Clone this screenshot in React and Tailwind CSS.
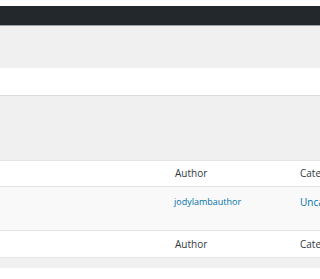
export default function App() {
  const font = { fontFamily: '"Open Sans", "Liberation Sans", sans-serif' };
  return (
    <div className="w-[320px] h-[279px] bg-white overflow-hidden text-[10px] text-[#32373c]" style={font}>
      <div className="h-[6px] bg-white" />
      <div className="h-[19px] bg-[#23282d]" />
      <div className="h-[1px] bg-[#9ea3a8]" />
      <div className="h-[42px] bg-[#f0f0f0]" />
      <div className="h-[28px] bg-white border-b border-[#dcdcdc]" />
      <div className="h-[64px] bg-[#f0f0f0]" />
      <div className="border-t border-[#e5e5e5] bg-white overflow-hidden">
        <div className="h-[26px] flex items-center border-b border-[#e5e5e5]">
          <div className="w-[175px] shrink-0" />
          <div className="w-[125px] shrink-0 whitespace-nowrap">Author</div>
          <div className="shrink-0 whitespace-nowrap">Categories</div>
        </div>
        <div className="h-[44px] flex items-start pt-[8px] bg-[#f9f9f9] border-b border-[#e5e5e5]">
          <div className="w-[174px] shrink-0" />
          <div className="w-[126px] shrink-0 whitespace-nowrap text-[#0073aa] text-[9px]">jodylambauthor</div>
          <div className="shrink-0 whitespace-nowrap text-[#0073aa]">Uncategorized</div>
        </div>
        <div className="h-[27px] flex items-center border-b border-[#e5e5e5]">
          <div className="w-[175px] shrink-0" />
          <div className="w-[125px] shrink-0 whitespace-nowrap">Author</div>
          <div className="shrink-0 whitespace-nowrap">Categories</div>
        </div>
      </div>
      <div className="h-[10px] bg-[#f0f0f0]" />
      <div className="h-[11px] bg-white" />
    </div>
  );
}
